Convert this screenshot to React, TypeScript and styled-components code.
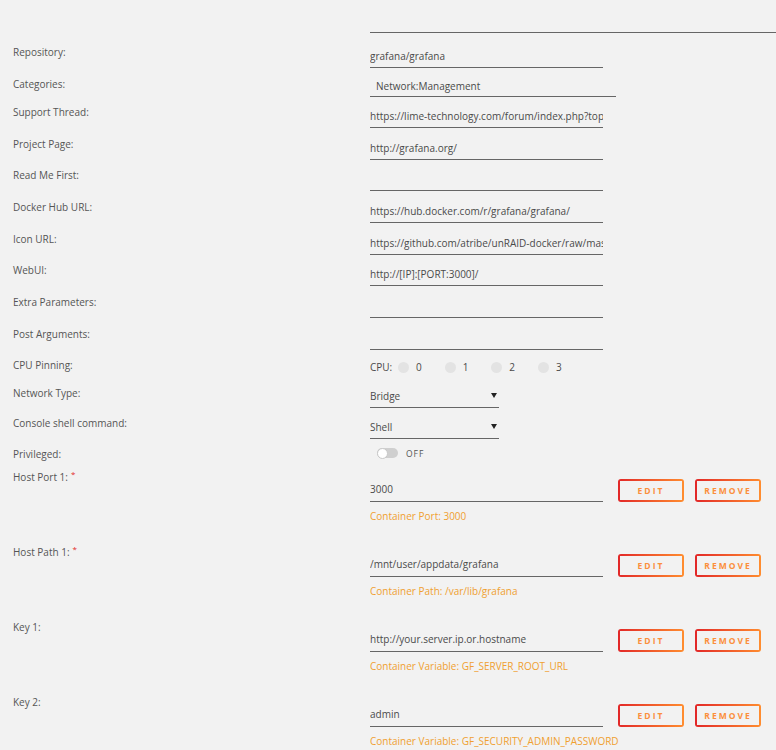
import React from "react";
import styled, { createGlobalStyle } from "styled-components";

const Global = createGlobalStyle`
  html, body { margin: 0; padding: 0; background: #f2f2f2; }
  body { font-family: "Open Sans", "Noto Sans", sans-serif; font-size: 10px; color: #555; }
  * { box-sizing: border-box; }
`;

const Page = styled.div`
  padding-left: 13px;
  overflow: hidden;
  height: 750px;
`;

const Row = styled.div<{ $h: number }>`
  display: grid;
  grid-template-columns: 357px 1fr;
  height: ${(p) => p.$h}px;
`;

const Label = styled.div`
  line-height: 20px;
  color: #555;
  white-space: nowrap;
`;

const Req = styled.span`
  color: #e22828;
  font-size: 8px;
  position: relative;
  top: -4px;
  margin-left: 3px;
`;

const Value = styled.div`
  min-width: 0;
`;

const TextInput = styled.input<{ $w?: number; $mt?: number; $h?: number; $indent?: number; $pb?: number }>`
  display: block;
  width: ${(p) => p.$w ?? 233}px;
  height: ${(p) => p.$h ?? 21}px;
  margin-top: ${(p) => p.$mt ?? 5}px;
  padding: 0 0 ${(p) => p.$pb ?? 2}px ${(p) => p.$indent ?? 0}px;
  border: none;
  border-bottom: 1px solid #666;
  background: transparent;
  font-family: inherit;
  font-size: 10px;
  color: #4a4a4a;
  outline: none;
`;

const SelectBox = styled.div<{ $mt: number }>`
  width: 129px;
  height: 21px;
  margin-top: ${(p) => p.$mt}px;
  padding-bottom: 2px;
  border-bottom: 1px solid #666;
  display: flex;
  align-items: center;
  justify-content: space-between;
  color: #4a4a4a;
  font-size: 10px;
`;

const Arrow = styled.svg`
  width: 6px;
  height: 5px;
  margin-right: 2px;
`;

const CpuList = styled.div`
  display: flex;
  align-items: center;
  padding-top: 4px;
  line-height: 16px;
  color: #4a4a4a;
`;

const CpuTitle = styled.span`
  width: 28px;
`;

const CpuItem = styled.label`
  width: 46.67px;
  display: flex;
  align-items: center;
  gap: 7px;
`;

const Dot = styled.span`
  width: 11px;
  height: 11px;
  border-radius: 50%;
  background: #e3e3e3;
`;

const ToggleWrap = styled.div`
  display: flex;
  align-items: center;
  gap: 8px;
  padding-left: 7px;
  height: 19px;
`;

const Track = styled.span`
  position: relative;
  width: 21px;
  height: 10px;
  border-radius: 5px;
  background: #cfcfcf;
`;

const Knob = styled.span`
  position: absolute;
  left: 0;
  top: -0.5px;
  width: 11px;
  height: 11px;
  border-radius: 50%;
  background: #fff;
  border: 1px solid #c8c8c8;
`;

const OffText = styled.span`
  font-size: 8.5px;
  letter-spacing: 1px;
  color: #555;
`;

const InputLine = styled.div`
  display: flex;
  align-items: flex-end;
  margin-top: 11px;
`;

const Btn = styled.button<{ $ml: number }>`
  width: 66px;
  height: 23px;
  margin-left: ${(p) => p.$ml}px;
  padding: 0;
  border: 0;
  border-radius: 3px;
  cursor: pointer;
  font-family: inherit;
  font-size: 8.5px;
  font-weight: 700;
  letter-spacing: 2px;
  text-transform: uppercase;
  color: #fb8f3c;
  background:
    linear-gradient(90deg, #e22828, #ff8c2f) 0 0 / 100% 2px no-repeat,
    linear-gradient(90deg, #e22828, #ff8c2f) 0 100% / 100% 2px no-repeat,
    linear-gradient(#e22828, #e22828) 0 0 / 2px 100% no-repeat,
    linear-gradient(#ff8c2f, #ff8c2f) 100% 0 / 2px 100% no-repeat;
`;

const Hint = styled.div`
  margin-top: 6px;
  line-height: 16px;
  color: #f0a030;
  white-space: nowrap;
`;

type Simple = { label: string; value: string; h: number };

const simpleTop: Simple[] = [
  { label: "Support Thread:", value: "https://lime-technology.com/forum/index.php?topic=49240.0", h: 31.67 },
  { label: "Project Page:", value: "http://grafana.org/", h: 31.67 },
  { label: "Read Me First:", value: "", h: 31.67 },
  { label: "Docker Hub URL:", value: "https://hub.docker.com/r/grafana/grafana/", h: 31.67 },
  { label: "Icon URL:", value: "https://github.com/atribe/unRAID-docker/raw/master/icons/grafana.png", h: 31.67 },
  { label: "WebUI:", value: "http://[IP]:[PORT:3000]/", h: 31.67 },
  { label: "Extra Parameters:", value: "", h: 31.67 },
  { label: "Post Arguments:", value: "", h: 31.67 },
];

const ports = [
  { label: "Host Port 1:", req: true, value: "3000", hint: "Container Port: 3000" },
  { label: "Host Path 1:", req: true, value: "/mnt/user/appdata/grafana", hint: "Container Path: /var/lib/grafana" },
  { label: "Key 1:", req: false, value: "http://your.server.ip.or.hostname", hint: "Container Variable: GF_SERVER_ROOT_URL" },
  { label: "Key 2:", req: false, value: "admin", hint: "Container Variable: GF_SECURITY_ADMIN_PASSWORD" },
];

const DownArrow = () => (
  <Arrow viewBox="0 0 6 5">
    <path d="M0 0 L6 0 L3 5 Z" fill="#222" />
  </Arrow>
);

export default function App() {
  return (
    <>
      <Global />
      <Page>
        <Row $h={42}>
          <Label />
          <Value>
            <TextInput $w={406} $mt={12} $h={21} readOnly value="" />
          </Value>
        </Row>
        <Row $h={32}>
          <Label>Repository:</Label>
          <Value>
            <TextInput readOnly value="grafana/grafana" />
          </Value>
        </Row>
        <Row $h={28}>
          <Label>Categories:</Label>
          <Value>
            <TextInput $w={246} $h={18} $indent={6} $pb={3} readOnly value="Network:Management" />
          </Value>
        </Row>
        {simpleTop.map((r) => (
          <Row key={r.label} $h={r.h}>
            <Label>{r.label}</Label>
            <Value>
              <TextInput readOnly value={r.value} />
            </Value>
          </Row>
        ))}
        <Row $h={27.7}>
          <Label>CPU Pinning:</Label>
          <Value>
            <CpuList>
              <CpuTitle>CPU:</CpuTitle>
              {["0", "1", "2", "3"].map((c) => (
                <CpuItem key={c}>
                  <Dot />
                  {c}
                </CpuItem>
              ))}
            </CpuList>
          </Value>
        </Row>
        <Row $h={30}>
          <Label>Network Type:</Label>
          <Value>
            <SelectBox $mt={4}>
              Bridge
              <DownArrow />
            </SelectBox>
          </Value>
        </Row>
        <Row $h={31}>
          <Label>Console shell command:</Label>
          <Value>
            <SelectBox $mt={5}>
              Shell
              <DownArrow />
            </SelectBox>
          </Value>
        </Row>
        <Row $h={23}>
          <Label>Privileged:</Label>
          <Value>
            <ToggleWrap>
              <Track>
                <Knob />
              </Track>
              <OffText>OFF</OffText>
            </ToggleWrap>
          </Value>
        </Row>
        {ports.map((p) => (
          <Row key={p.label} $h={75}>
            <Label>
              {p.label}
              {p.req && <Req>*</Req>}
            </Label>
            <Value>
              <InputLine>
                <TextInput $mt={0} $h={24} $pb={0} readOnly value={p.value} />
                <Btn $ml={15}>Edit</Btn>
                <Btn $ml={11}>Remove</Btn>
              </InputLine>
              <Hint>{p.hint}</Hint>
            </Value>
          </Row>
        ))}
      </Page>
    </>
  );
}
